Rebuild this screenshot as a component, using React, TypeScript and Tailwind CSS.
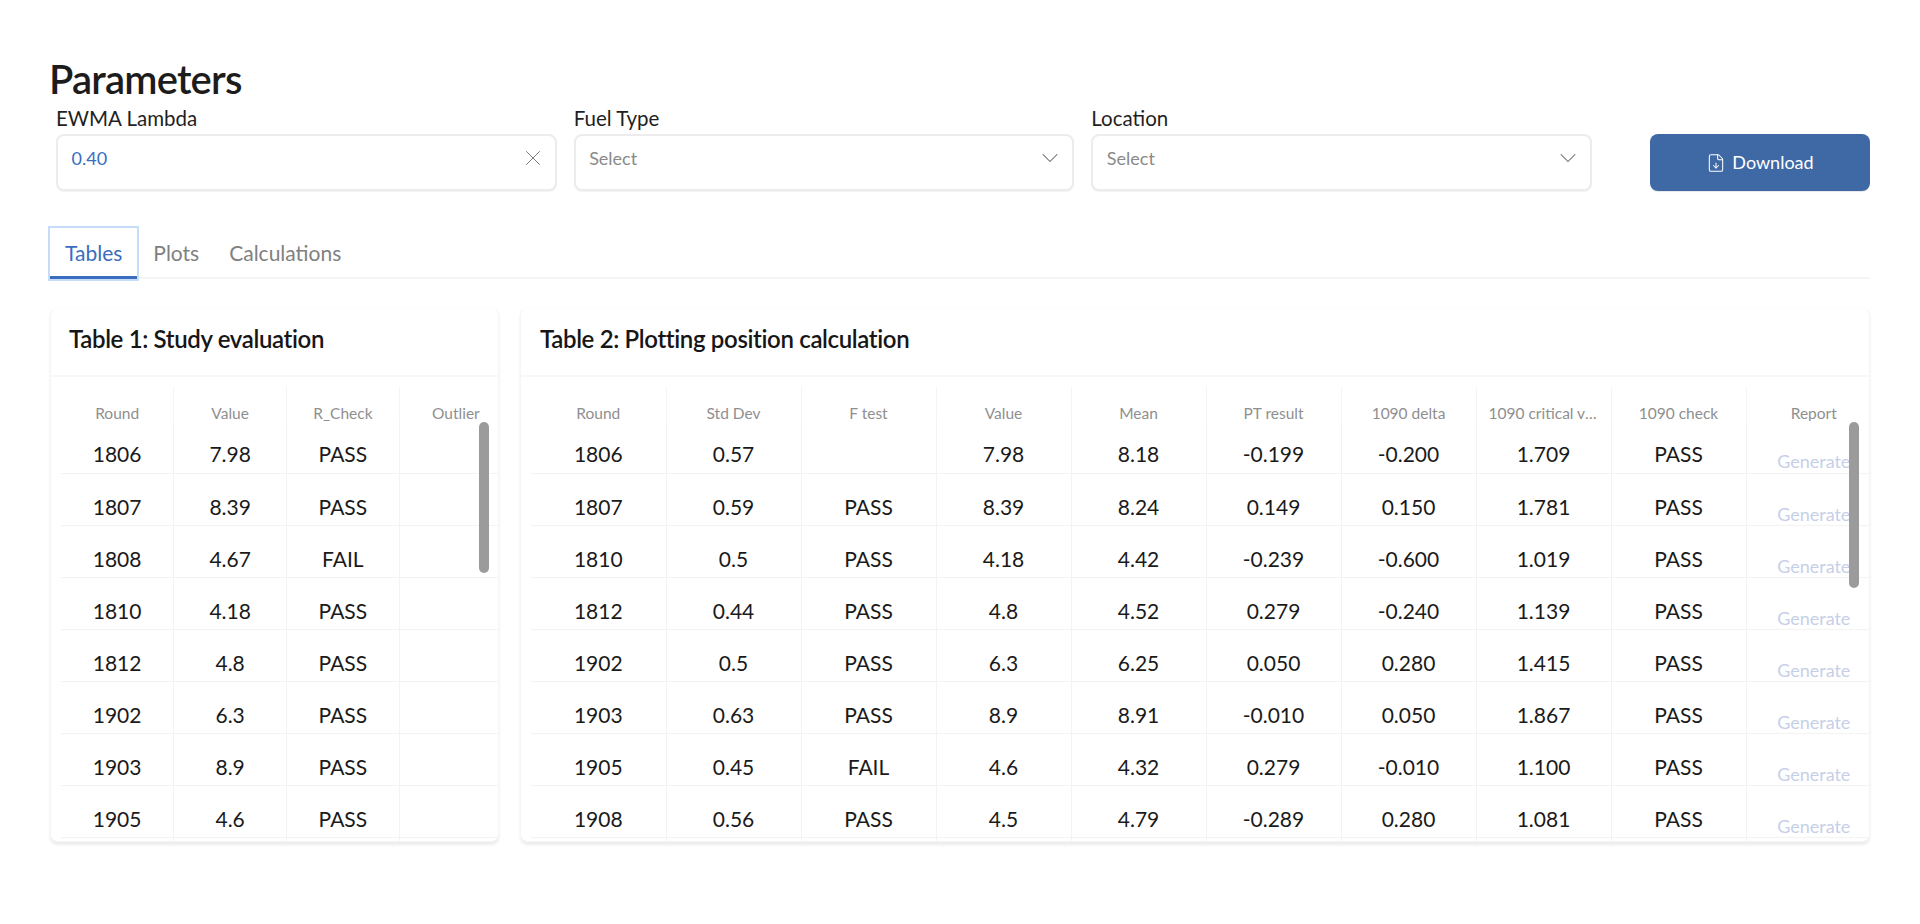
import { X, ChevronDown, FileDown } from "lucide-react";

const t1 = [
  ["1806", "7.98", "PASS"],
  ["1807", "8.39", "PASS"],
  ["1808", "4.67", "FAIL"],
  ["1810", "4.18", "PASS"],
  ["1812", "4.8", "PASS"],
  ["1902", "6.3", "PASS"],
  ["1903", "8.9", "PASS"],
  ["1905", "4.6", "PASS"],
];
const t2 = [
  ["1806", "0.57", "", "7.98", "8.18", "-0.199", "-0.200", "1.709", "PASS"],
  ["1807", "0.59", "PASS", "8.39", "8.24", "0.149", "0.150", "1.781", "PASS"],
  ["1810", "0.5", "PASS", "4.18", "4.42", "-0.239", "-0.600", "1.019", "PASS"],
  ["1812", "0.44", "PASS", "4.8", "4.52", "0.279", "-0.240", "1.139", "PASS"],
  ["1902", "0.5", "PASS", "6.3", "6.25", "0.050", "0.280", "1.415", "PASS"],
  ["1903", "0.63", "PASS", "8.9", "8.91", "-0.010", "0.050", "1.867", "PASS"],
  ["1905", "0.45", "FAIL", "4.6", "4.32", "0.279", "-0.010", "1.100", "PASS"],
  ["1908", "0.56", "PASS", "4.5", "4.79", "-0.289", "0.280", "1.081", "PASS"],
];
const h1 = ["Round", "Value", "R_Check", "Outlier"];
const h2 = ["Round", "Std Dev", "F test", "Value", "Mean", "PT result", "1090 delta", "1090 critical value", "1090 check", "Report"];

function Th({ children }: { children: string }) {
  return (
    <th className="h-[34px] pt-[18px] px-[12px] text-[15.5px] leading-4 font-normal text-[#8f8f8f] text-center align-top truncate border-r border-[#f4f4f4] last:border-r-0">
      {children}
    </th>
  );
}
function Td({ children }: { children?: string }) {
  return (
    <td className="h-[52px] pt-[21px] px-[12px] text-[21px] leading-6 text-[#1a1a1a] text-center align-top border-r border-b border-[#f3f3f3] last:border-r-0">
      {children}
    </td>
  );
}
function BlankRow({ cols }: { cols: number }) {
  return (
    <tr>
      {Array.from({ length: cols }, (_, i) => <Td key={i} />)}
    </tr>
  );
}

function Field({ label, value, clear }: { label: string; value?: string; clear?: boolean }) {
  return (
    <div className="flex flex-col">
      <div className="h-[26px] text-[20.5px] leading-[21px] text-[#1f1f1f]">{label}</div>
      <div className="flex h-[57px] items-start justify-between rounded-lg border-2 border-[#ececec] bg-white pl-[13.5px] pr-[9px] pt-[10px] shadow-[0_1px_1px_rgba(0,0,0,0.05)]">
        <span className={"text-[18px] leading-6 " + (value ? "text-[#3a6dc0]" : "text-[#8a8a8a]")}>{value ?? "Select"}</span>
        {clear ? (
          <X size={26} strokeWidth={0.9} className="mt-[-1px] text-[#7a7a7a]" />
        ) : (
          <ChevronDown size={28} strokeWidth={0.9} className="mt-[-2px] mr-[-1px] text-[#666666]" />
        )}
      </div>
    </div>
  );
}

export default function App() {
  return (
    <div
      className="h-[924px] overflow-hidden bg-white px-[50px] pt-[55px]"
      style={{ fontFamily: "Lato, 'Noto Sans', sans-serif" }}
    >
      <h1 className="ml-[-1px] h-[48px] text-[40px] leading-[48px] font-semibold tracking-[-0.8px] text-[#1c1c1c]">Parameters</h1>
      <div className="mt-[5px] flex items-end">
        <div className="ml-[6px] grid w-[1536px] grid-cols-3 gap-[17px]">
          <Field label="EWMA Lambda" value="0.40" clear />
          <Field label="Fuel Type" />
          <Field label="Location" />
        </div>
        <button className="ml-[58px] flex h-[57px] w-[220px] items-center justify-center gap-[6px] rounded-lg bg-[#3f69a5] text-[18px] text-white shadow-[0_1px_1px_rgba(0,0,0,0.1)]">
          <FileDown size={20} strokeWidth={1.25} />
          Download
        </button>
      </div>

      <div className="mt-[35px] flex h-[53px] items-stretch border-b-2 border-[#f5f5f5]">
        <div className="relative mt-[2px] flex items-center px-[15px] pt-[1px] text-[21px] text-[#3a6dc0] outline-2 outline-[#c5dcfb] -mb-[2px] border-b-[3px] border-[#3a6dc0]">
          Tables
        </div>
        <div className="ml-[1px] flex items-center px-[15px] pt-[2px] text-[21px] text-[#808080]">Plots</div>
        <div className="flex items-center px-[15px] pt-[2px] text-[21px] text-[#808080]">Calculations</div>
      </div>

      <div className="mt-[28px] flex gap-[21px]">
        <section className="relative h-[535px] w-[449px] shrink-0 overflow-hidden rounded-lg border border-[#f6f6f6] border-t-[#fcfcfc] bg-white shadow-[0_3px_3px_rgba(0,0,0,0.08)]">
          <div className="flex h-[69px] items-start border-b-2 border-[#f8f8f8] pl-[18px] pt-[17px] text-[24px] leading-7 font-semibold tracking-[-0.35px] text-[#161616]">
            Table 1: Study evaluation
          </div>
          <div className="overflow-hidden pl-[10px] pt-[10px]">
            <table className="w-[451px] table-fixed border-collapse">
              <thead>
                <tr>{h1.map((h) => <Th key={h}>{h}</Th>)}</tr>
              </thead>
              <tbody>
                {t1.map((r) => (
                  <tr key={r[0]}>
                    {r.map((c, i) => <Td key={i}>{c}</Td>)}
                    <Td />
                  </tr>
                ))}
                <BlankRow cols={4} />
              </tbody>
            </table>
          </div>
          <div className="absolute left-[428px] top-[114px] h-[151px] w-[10px] rounded-full bg-[#9b9b9b]" />
        </section>

        <section className="relative h-[535px] flex-1 overflow-hidden rounded-lg border border-[#f6f6f6] border-t-[#fcfcfc] bg-white shadow-[0_3px_3px_rgba(0,0,0,0.08)]">
          <div className="flex h-[69px] items-start border-b-2 border-[#f8f8f8] pl-[19px] pt-[17px] text-[24px] leading-7 font-semibold tracking-[-0.35px] text-[#161616]">
            Table 2: Plotting position calculation
          </div>
          <div className="overflow-hidden pl-[10px] pt-[10px]">
            <table className="w-[1350px] table-fixed border-collapse">
              <thead>
                <tr>{h2.map((h) => <Th key={h}>{h}</Th>)}</tr>
              </thead>
              <tbody>
                {t2.map((r) => (
                  <tr key={r[0]}>
                    {r.map((c, i) => <Td key={i}>{c}</Td>)}
                    <td className="h-[52px] pt-[30px] text-center align-top text-[18px] leading-5 text-[#c6cfe8] border-b border-[#f3f3f3]">
                      Generate
                    </td>
                  </tr>
                ))}
                <BlankRow cols={10} />
              </tbody>
            </table>
          </div>
          <div className="absolute left-[1328px] top-[114px] h-[166px] w-[10px] rounded-full bg-[#9b9b9b]" />
        </section>
      </div>
    </div>
  );
}
